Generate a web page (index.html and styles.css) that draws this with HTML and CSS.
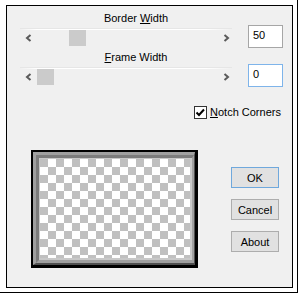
FILE: index.html
```html
<!doctype html>
<html lang="en">
<head>
	<meta charset="UTF-8" />
	<title>Frame</title>
	<link rel="stylesheet" href="styles.css">
</head>
<body>
<div class="window">
  <div class="dialog">
    <div class="row">
      <div class="slider_group">
        <div class="label">Border <u>W</u>idth</div>
        <div class="track"></div>
        <div class="controls">
          <svg class="arrow" width="7" height="8" viewBox="0 0 7 8"><path d="M5.5 1 L2 4 L5.5 7" /></svg>
          <div class="thumb_area"><div class="thumb" style="margin-left:32px"></div></div>
          <svg class="arrow arrow_r" width="7" height="8" viewBox="0 0 7 8"><path d="M1.5 1 L5 4 L1.5 7" /></svg>
        </div>
      </div>
      <div class="field">50</div>
    </div>
    <div class="row row2">
      <div class="slider_group">
        <div class="label"><u>F</u>rame Width</div>
        <div class="track"></div>
        <div class="controls">
          <svg class="arrow" width="7" height="8" viewBox="0 0 7 8"><path d="M5.5 1 L2 4 L5.5 7" /></svg>
          <div class="thumb_area"><div class="thumb" style="margin-left:0px"></div></div>
          <svg class="arrow arrow_r" width="7" height="8" viewBox="0 0 7 8"><path d="M1.5 1 L5 4 L1.5 7" /></svg>
        </div>
      </div>
      <div class="field focus">0</div>
    </div>
    <div class="check_row">
      <svg class="checkbox" width="13" height="13" viewBox="0 0 13 13">
        <rect x="0.5" y="0.5" width="12" height="12" fill="#fff" stroke="#333" />
        <path d="M2.5 6.5 L5 9 L10 3.5" fill="none" stroke="#000" stroke-width="2" />
      </svg>
      <span><u>N</u>otch Corners</span>
    </div>
    <div class="bottom">
      <div class="frame">
        <div class="bev1"><div class="bev2"><div class="bev3"><div class="checker"></div></div></div></div>
      </div>
      <div class="buttons">
        <div class="btn default">OK</div>
        <div class="btn">Cancel</div>
        <div class="btn">About</div>
      </div>
    </div>
  </div>
</div>
</body>
</html>
```
FILE: styles.css
```css
body{margin:0;background:#fff;font-family:"Liberation Sans",Arial,sans-serif;font-size:11px;color:#000;}
.window{width:298px;height:293px;box-sizing:border-box;border-right:1px solid #000;border-bottom:1px solid #000;padding:5px 0 0 6px;}
.dialog{width:287px;height:283px;box-sizing:border-box;border:1px solid #000;background:#f0f0f0;padding-top:6px;}

.row{display:flex;margin-left:13px;}
.row2{margin-top:3px;}
.slider_group{width:228px;}
.label{height:13px;line-height:13px;padding-left:4px;text-align:center;white-space:nowrap;}
.track{margin-top:3px;width:212px;height:1px;border-top:1px solid #e6e6e6;background:linear-gradient(to right,rgba(255,255,255,0),#fff 8%,#fff 88%,rgba(255,255,255,0));}
.controls{display:flex;align-items:center;height:16px;width:216px;}
.arrow{margin-left:5px;flex:none;}
.arrow path{fill:none;stroke:#5a5a5a;stroke-width:2;}
.arrow_r{margin-left:0;margin-right:6px;}
.thumb_area{flex:1;margin-left:5px;height:16px;}
.thumb{width:17px;height:16px;background:#cbcbcb;}
.field{margin-top:13px;width:35px;height:23px;box-sizing:border-box;border:1px solid #a6a6a6;background:#fff;padding:3px 0 0 4px;line-height:13px;}
.field.focus{border-color:#7eb4ea;}

.check_row{display:flex;align-items:center;height:13px;margin:19px 0 0 187px;line-height:13px;}
.checkbox{margin-right:3px;}

.bottom{display:flex;margin:31px 0 0 24px;}
.frame{width:167px;height:118px;box-sizing:border-box;border:solid #000;border-width:2px 3px 3px 2px;}
.bev1{height:100%;box-sizing:border-box;border:solid;border-width:3px 1px 2px 3px;border-color:#a0a0a0 #505050 #505050 #a0a0a0;}
.bev2{height:100%;box-sizing:border-box;border:solid;border-width:3px 2px 3px 3px;border-color:#7c7c7c #a0a0a0 #a0a0a0 #7c7c7c;}
.bev3{height:100%;box-sizing:border-box;border:solid;border-width:1px 2px 2px 1px;border-color:#c8c8c8;}
.checker{height:100%;background:repeating-conic-gradient(#fff 0 25%,#c0c0c0 0 50%);background-size:16px 16px;}

.buttons{display:flex;flex-direction:column;gap:11px;margin:17px 0 0 33px;}
.btn{width:48px;height:21px;box-sizing:border-box;border:1px solid #adadad;background:#e1e1e1;display:flex;align-items:center;justify-content:center;}
.btn.default{border-color:#6fa8dc;}
```
